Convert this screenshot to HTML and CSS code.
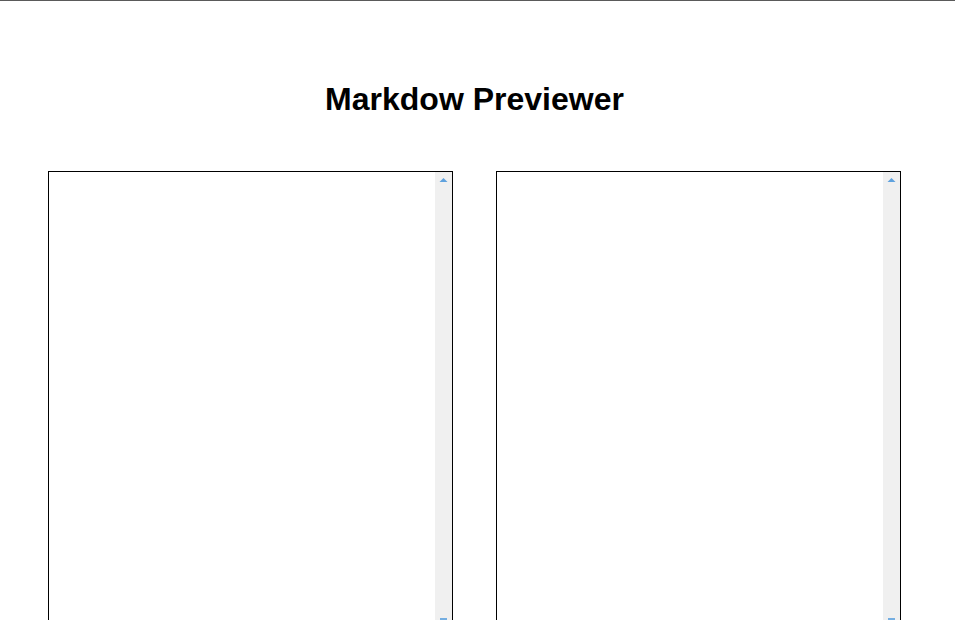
FILE: index.html
```html
<!DOCTYPE html>
<html>
<head>
<meta charset="utf-8">
<title>Markdown Previewer</title>
<link rel="stylesheet" href="styles.css">
</head>
<body>
<div class="topline"></div>
<h1 class="title">Markdow Previewer</h1>
<div class="panes">
  <div class="pane">
    <textarea class="pane-body editor"></textarea>
    <div class="scrollbar">
      <svg class="arrow" width="17" height="17" viewBox="0 0 17 17"><polygon points="4.5,10 12.5,10 8.5,6" fill="#5fa2de"/></svg>
      <div class="thumb"></div>
    </div>
  </div>
  <div class="pane">
    <div class="pane-body preview"></div>
    <div class="scrollbar">
      <svg class="arrow" width="17" height="17" viewBox="0 0 17 17"><polygon points="4.5,10 12.5,10 8.5,6" fill="#5fa2de"/></svg>
      <div class="thumb"></div>
    </div>
  </div>
</div>
</body>
</html>
```
FILE: styles.css
```css
html, body {
  margin: 0;
  padding: 0;
  background: #fff;
  font-family: "Liberation Sans", Arial, sans-serif;
  overflow: hidden;
}
.topline {
  height: 1px;
  background: #5a5a5a;
}
.title {
  margin: 0;
  padding: 80px 6px 0 0;
  text-align: center;
  font-size: 32px;
  font-weight: bold;
  line-height: 37px;
  color: #000;
}
.panes {
  display: flex;
  gap: 43px;
  padding: 53px 0 0 48px;
}
.pane {
  box-sizing: border-box;
  width: 405px;
  height: 560px;
  flex: none;
  display: flex;
  border: 1px solid #000;
  background: #fff;
}
.pane-body {
  flex: 1;
  min-width: 0;
  margin: 0;
  padding: 0;
  border: 0;
  outline: none;
  resize: none;
  background: #fff;
  font-family: "Liberation Mono", monospace;
}
.scrollbar {
  width: 17px;
  flex: none;
  background: #f0f0f0;
  display: flex;
  flex-direction: column;
  align-items: center;
}
.arrow {
  display: block;
}
.thumb {
  margin-top: 429px;
  width: 7px;
  height: 3px;
  background: #5fa2de;
  opacity: 0.85;
}
```
